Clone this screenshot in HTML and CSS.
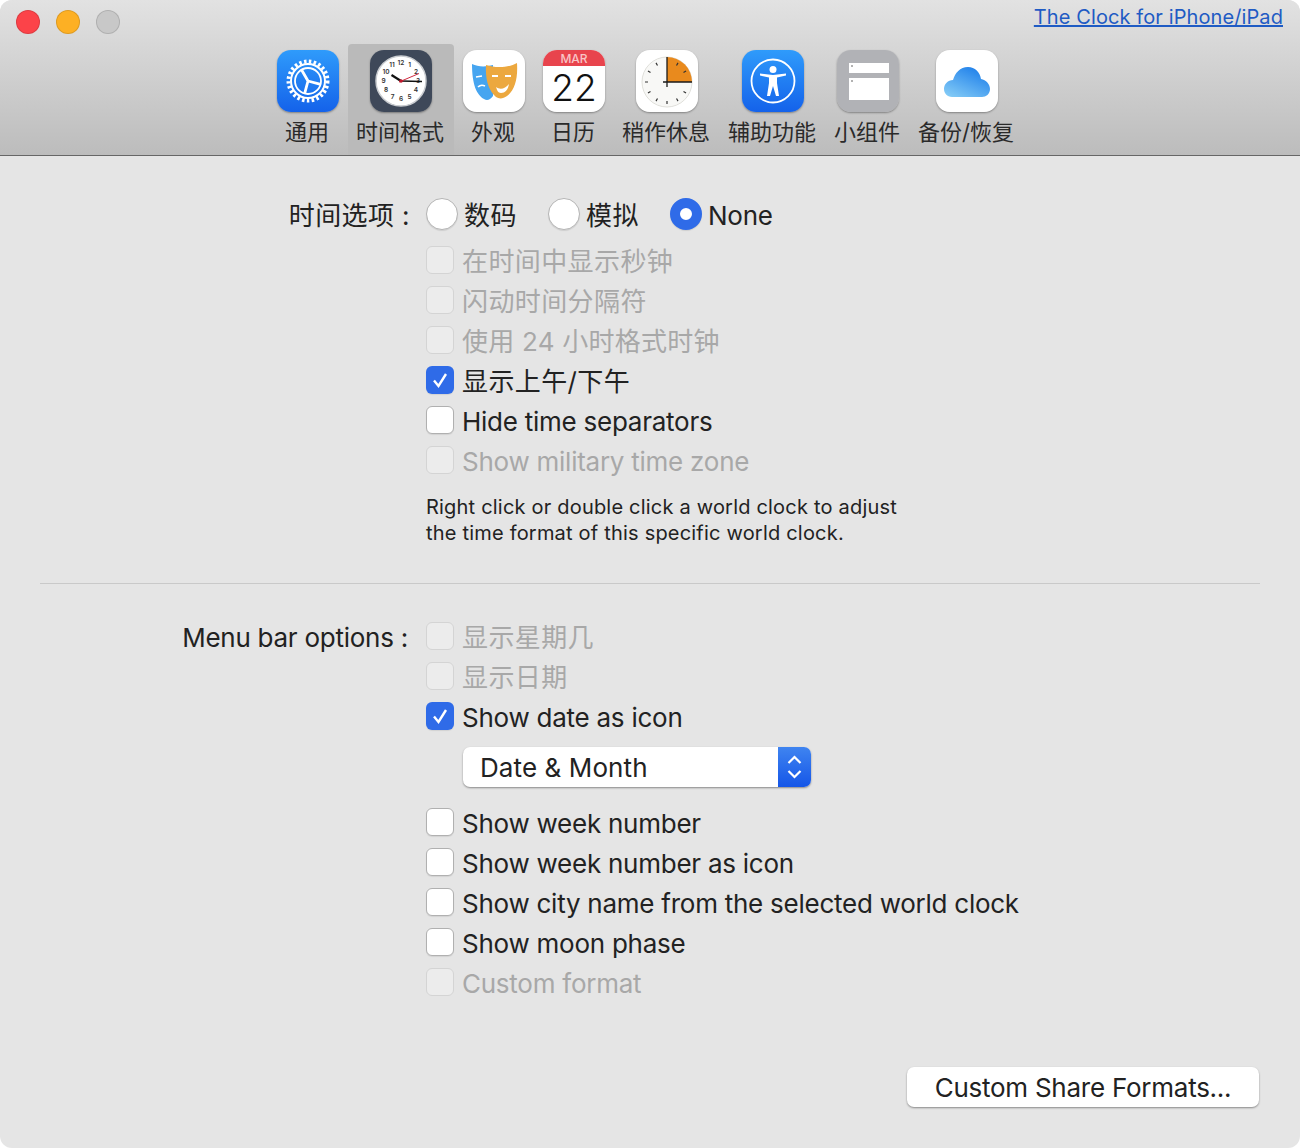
FILE: index.html
```html
<!DOCTYPE html>
<html lang="zh">
<head>
<meta charset="utf-8">
<title>Clock preferences</title>
<link rel="stylesheet" href="styles.css">
</head>
<body>
<div class="window">
  <header class="toolbar">
    <div class="lights"><span class="light red"></span><span class="light amber"></span><span class="light grey"></span></div>
    <a class="promo" href="#">The Clock for iPhone/iPad</a>
    <nav class="tabs">
      <div class="tab">
        <svg class="icon" viewBox="0 0 62 62"><defs><linearGradient id="blue" x1="0" y1="0" x2="0" y2="1"><stop offset="0" stop-color="#2f9bfb"/><stop offset="1" stop-color="#1462ea"/></linearGradient></defs><rect width="62" height="62" fill="url(#blue)"/><g fill="none" stroke="#fff"><circle cx="31" cy="31" r="19.500" stroke-width="4" stroke-dasharray="2.500 2.350"/><circle cx="31" cy="31" r="17" stroke-width="2"/><circle cx="31" cy="31" r="13" stroke-width="1.800"/><path d="M31 31 24.500 19.700M31 31 43.600 34.400M31 31 27.600 43.600" stroke-width="2.800"/></g></svg>
        <span class="tab-label">通用</span>
      </div>
      <div class="tab selected">
        <svg class="icon" viewBox="0 0 62 62"><rect width="62" height="62" fill="#3e4859"/><circle cx="31" cy="31" r="25" fill="#fff" stroke="#c9ccd0" stroke-width="1.500"/><g class="clock-nums" text-anchor="middle"><text x="31" y="15">12</text><text x="39.500" y="17">1</text><text x="46" y="23.500">2</text><text x="48" y="33">3</text><text x="46" y="42">4</text><text x="39.500" y="48.500">5</text><text x="31" y="51">6</text><text x="22.500" y="48.500">7</text><text x="16" y="42">8</text><text x="13.500" y="33">9</text><text x="16" y="23.500">10</text><text x="22" y="17">11</text></g><path d="M31 31 21.500 25" stroke="#111" stroke-width="2.200"/><path d="M31 31 52 31.500" stroke="#111" stroke-width="1.600"/><path d="M29 32 49 23.500" stroke="#d02a3e" stroke-width="1"/><circle cx="31" cy="31" r="1.800" fill="#c0182c"/></svg>
        <span class="tab-label">时间格式</span>
      </div>
      <div class="tab">
        <svg class="icon" viewBox="0 0 62 62"><rect width="62" height="62" fill="#fff"/><path d="M9 14C15 17 23 17 30 15V46C27 50 24 51 21 49 14 45 9 35 9 14Z" fill="#46a5f0"/><path d="M13 27l6-1M15 37c2-2 5-2 7-1" stroke="#fff" stroke-width="1.600" fill="none"/><path d="M23 15C32 18 45 18 54 13 55 28 52 40 44 46 40 49 36 49 33 47 26 41 22 30 23 15Z" fill="#eca83f"/><path d="M29 26l6 0M42 26l6 0" stroke="#fff" stroke-width="2"/><path d="M33 37c4 3 9 2 13-3-1 6-4 9-8 9-3 0-4-3-5-6Z" fill="#fff"/></svg>
        <span class="tab-label">外观</span>
      </div>
      <div class="tab">
        <svg class="icon" viewBox="0 0 62 62"><rect width="62" height="62" fill="#fff"/><rect width="62" height="16" fill="#e8444d"/><text class="cal-month" x="31" y="13" text-anchor="middle">MAR</text><text class="cal-day" x="31" y="51" text-anchor="middle">22</text></svg>
        <span class="tab-label">日历</span>
      </div>
      <div class="tab">
        <svg class="icon" viewBox="0 0 62 62"><rect width="62" height="62" fill="#fff"/><circle cx="31" cy="32" r="25" fill="#f8f8f6" stroke="#dfdfda" stroke-width="1"/><path d="M31 32V7A25 25 0 0 1 56 32Z" fill="#e98a1d"/><path d="M31 7V37M27 32H56" stroke="#1a1a1a" stroke-width="1.300"/><path d="M42 12.900 40.500 15.500M50.050 21 47.500 22.500M50.050 43 47.500 41.500M42 51.100 40.500 48.500M31 54V51M20 51.100 21.500 48.500M11.950 43 14.500 41.500M9 32H12M11.950 21 14.500 22.500M20 12.900 21.500 15.500" stroke="#333" stroke-width="1.200"/></svg>
        <span class="tab-label">稍作休息</span>
      </div>
      <div class="tab">
        <svg class="icon" viewBox="0 0 62 62"><rect width="62" height="62" fill="url(#blue)"/><circle cx="31" cy="31" r="21.500" fill="none" stroke="#fff" stroke-width="1.800"/><circle cx="31" cy="19.500" r="3.500" fill="#fff"/><path d="M18 25.500 27 27.500V33L25 46H28L31 36 34 46H37L35 33V27.500L44 25.500V23.500L31 25 18 23.500Z" fill="#fff"/></svg>
        <span class="tab-label">辅助功能</span>
      </div>
      <div class="tab">
        <svg class="icon" viewBox="0 0 62 62"><rect width="62" height="62" fill="#b1b2b6"/><rect x="12" y="13" width="40" height="10" fill="#fff"/><rect x="12" y="28" width="40" height="22" fill="#fff"/><circle cx="15" cy="16" r="1" fill="#999"/><circle cx="15" cy="31" r="1" fill="#999"/></svg>
        <span class="tab-label">小组件</span>
      </div>
      <div class="tab">
        <svg class="icon" viewBox="0 0 62 62"><defs><linearGradient id="sky" x1="0" y1="1" x2="0.700" y2="0"><stop offset="0" stop-color="#8ad0f7"/><stop offset="1" stop-color="#1f80ea"/></linearGradient></defs><rect width="62" height="62" fill="#fff"/><path d="M16 47C11 47 8 43 8 39 8 34 12 30 17 30 19 23 24 17 32 17 39 17 44 22 45 29 50 30 54 34 54 39 54 44 50 47 46 47Z" fill="url(#sky)"/></svg>
        <span class="tab-label">备份/恢复</span>
      </div>
    </nav>
  </header>

  <main class="panel">
    <section class="form">
      <div class="field-label">时间选项 :</div>
      <div class="radios">
        <label class="radio-item"><span class="radio"></span><span class="opt">数码</span></label>
        <label class="radio-item"><span class="radio"></span><span class="opt">模拟</span></label>
        <label class="radio-item"><span class="radio on"></span><span class="opt latin">None</span></label>
      </div>
      <div class="checks first">
        <div class="row off"><span class="box"></span><span class="opt">在时间中显示秒钟</span></div>
        <div class="row off"><span class="box"></span><span class="opt">闪动时间分隔符</span></div>
        <div class="row off"><span class="box"></span><span class="opt mixed">使用 24 小时格式时钟</span></div>
        <div class="row"><span class="box on"><svg viewBox="0 0 28 28"><path d="M8 14.500 12.500 20 20 8" fill="none" stroke="#fff" stroke-width="2.400"/></svg></span><span class="opt">显示上午/下午</span></div>
        <div class="row"><span class="box"></span><span class="opt latin">Hide time separators</span></div>
        <div class="row off"><span class="box"></span><span class="opt latin">Show military time zone</span></div>
        <p class="hint">Right click or double click a world clock to adjust<br>the time format of this specific world clock.</p>
      </div>
    </section>

    <hr class="divider">

    <section class="form">
      <div class="field-label menu-label">Menu bar options :</div>
      <div class="checks">
        <div class="row off"><span class="box"></span><span class="opt">显示星期几</span></div>
        <div class="row off"><span class="box"></span><span class="opt">显示日期</span></div>
        <div class="row"><span class="box on"><svg viewBox="0 0 28 28"><path d="M8 14.500 12.500 20 20 8" fill="none" stroke="#fff" stroke-width="2.400"/></svg></span><span class="opt latin">Show date as icon</span></div>
        <div class="select"><span class="select-text">Date &amp; Month</span><span class="stepper"><svg viewBox="0 0 32 40"><path d="M10 16 16 10 22 16M10 24 16 30 22 24" fill="none" stroke="#fff" stroke-width="2.200"/></svg></span></div>
        <div class="row"><span class="box"></span><span class="opt latin">Show week number</span></div>
        <div class="row"><span class="box"></span><span class="opt latin">Show week number as icon</span></div>
        <div class="row"><span class="box"></span><span class="opt latin">Show city name from the selected world clock</span></div>
        <div class="row"><span class="box"></span><span class="opt latin">Show moon phase</span></div>
        <div class="row off"><span class="box"></span><span class="opt latin">Custom format</span></div>
      </div>
    </section>

    <div class="actions"><button class="share" type="button">Custom Share Formats...</button></div>
  </main>
</div>
</body>
</html>
```

FILE: styles.css
```css
* { box-sizing: border-box; }
html, body { margin: 0; background: #fff; }
body { font-family: Inter, "Noto Sans CJK SC", sans-serif; color: #222; }

.window { width: 1300px; height: 1148px; background: #e5e5e5; border-radius: 12px; overflow: hidden; }

.toolbar { position: relative; height: 156px; padding-top: 44px; background: linear-gradient(#e2e2e2, #bcbcbc); border-bottom: 1px solid #666; }
.lights { position: absolute; left: 16px; top: 10px; display: flex; gap: 16px; }
.light { width: 24px; height: 24px; border-radius: 50%; border: 1px solid rgba(0,0,0,.12); }
.red { background: #fc4349; }
.amber { background: #fdb024; }
.grey { background: #c8c8c8; }
.promo { position: absolute; right: 17px; top: 5px; font-size: 20px; line-height: 24px; color: #1f5bc4; letter-spacing: .1px; }

.tabs { display: flex; margin-left: 268px; height: 111px; }
.tab { min-width: 80px; padding: 6px 9px 0; display: flex; flex-direction: column; align-items: center; border-radius: 4px 4px 0 0; }
.tab.selected { background: #bababa; }
.icon { width: 62px; height: 62px; border-radius: 14px; box-shadow: 0 1px 2px rgba(0,0,0,.35); flex: none; }
.tab-label { margin: 6px 1px 0 -1px; font-size: 22px; line-height: 28px; white-space: nowrap; color: #2a2a2a; }
.clock-nums { font-size: 6.5px; font-weight: 600; fill: #333; }
.cal-month { font-size: 12px; font-weight: 500; fill: #f9c4c6; }
.cal-day { font-size: 37px; font-weight: 300; fill: #111; }

.panel { padding-top: 38px; }
.form { display: grid; grid-template-columns: 426px 1fr; }
.field-label { height: 40px; text-align: right; padding-right: 16px; font-size: 26px; line-height: 44px; letter-spacing: .4px; }
.menu-label { letter-spacing: -.25px; padding-right: 18px; }

.radios { display: flex; }
.radio-item { display: flex; align-items: center; height: 40px; width: 122px; gap: 6px; }
.radio { width: 32px; height: 32px; border-radius: 50%; background: #fff; border: 1px solid #b5b5b5; box-shadow: 0 1px 1px rgba(0,0,0,.1); flex: none; }
.radio.on { background: #fff; border: 10px solid #2f6be8; }

.opt { padding-top: 4px; font-size: 26px; line-height: 40px; white-space: nowrap; letter-spacing: .4px; }
.opt.latin { letter-spacing: -.25px; }
.opt.mixed { letter-spacing: .25px; }
.checks { grid-column: 2; }
.checks.first { margin-top: 6px; }
.row { display: flex; align-items: center; height: 40px; gap: 8px; }
.box { width: 28px; height: 28px; border-radius: 6px; background: #fff; border: 1px solid #b0b0b0; box-shadow: 0 1px 1px rgba(0,0,0,.08); flex: none; }
.box svg { display: block; width: 28px; height: 28px; }
.box.on { background: #2f6be8; border: 0; }
.off .box { background: #ececec; border-color: #d4d4d4; box-shadow: none; }
.off .opt { color: #a8a8a8; }

.hint { margin: 14px 0 0; font-size: 20px; line-height: 26px; letter-spacing: .2px; }
.divider { margin: 37px 40px 32px; height: 1px; border: 0; background: #c9c9c9; }

.select { display: flex; justify-content: space-between; width: 348px; height: 40px; margin: 11px 0 15px 37px; background: #fff; border-radius: 7px; box-shadow: 0 1px 2px rgba(0,0,0,.4); overflow: hidden; }
.select-text { padding-left: 17px; font-size: 26px; line-height: 42px; letter-spacing: .1px; }
.stepper { width: 33px; background: linear-gradient(#3f84f0, #1556e8); }
.stepper svg { display: block; width: 33px; height: 40px; }

.actions { display: flex; justify-content: flex-end; padding: 65px 41px 0 0; }
.share { width: 352px; height: 40px; padding: 0; border: 0; background: #fff; border-radius: 7px; box-shadow: 0 1px 2px rgba(0,0,0,.4); font-family: inherit; font-size: 26px; letter-spacing: -.25px; color: #222; }
```
